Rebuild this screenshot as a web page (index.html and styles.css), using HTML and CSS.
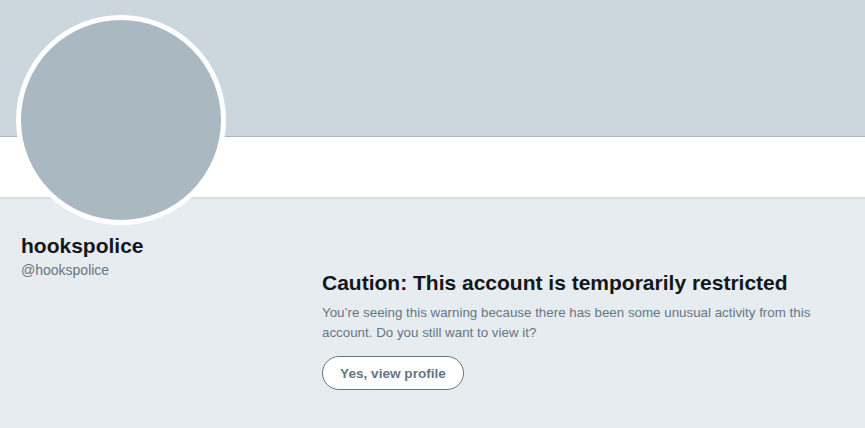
FILE: index.html
```html
<!DOCTYPE html>
<html>
<head>
<meta charset="utf-8">
<link rel="stylesheet" href="styles.css">
</head>
<body>
<div class="page">
  <div class="banner"></div>
  <div class="navbar"></div>
  <div class="avatar"></div>
  <div class="content">
    <div class="profile">
      <div class="name">hookspolice</div>
      <div class="handle">@hookspolice</div>
    </div>
    <div class="warning">
      <h1 class="title">Caution: This account is temporarily restricted</h1>
      <p class="text">You’re seeing this warning because there has been some unusual activity from this account. Do you still want to view it?</p>
      <button class="btn">Yes, view profile</button>
    </div>
  </div>
</div>
</body>
</html>
```
FILE: styles.css
```css
html, body {
  margin: 0;
  padding: 0;
  background: #e6ecf0;
  font-family: "Liberation Sans", Arial, sans-serif;
  height: 100%;
  overflow: hidden;
}
.page {
  position: relative;
  width: 865px;
  height: 428px;
}
.banner {
  height: 136px;
  background: #ccd6dd;
  border-bottom: 1px solid #aab8c2;
}
.navbar {
  height: 60px;
  background: #fff;
  border-bottom: 1px solid #d5dce1;
  box-shadow: 0 1px 1px rgba(0,0,0,0.06);
}
.avatar {
  position: absolute;
  left: 16px;
  top: 15px;
  width: 200px;
  height: 200px;
  border: 5px solid #fff;
  border-radius: 50%;
  background: #aab8c2;
}
.content {
  display: flex;
  padding-top: 36px;
}
.profile {
  width: 301px;
  padding-left: 21px;
}
.name {
  font-size: 21px;
  font-weight: 700;
  color: #14171a;
  line-height: 24px;
}
.handle {
  font-size: 14px;
  color: #657786;
  line-height: 20px;
  margin-top: 2px;
}
.warning {
  padding-top: 36px;
  width: 520px;
}
.title {
  margin: 0;
  font-size: 21px;
  font-weight: 700;
  color: #14171a;
  line-height: 26px;
}
.text {
  margin: 7px 0 0;
  font-size: 13.35px;
  line-height: 20px;
  color: #657786;
}
.btn {
  display: block;
  margin-top: 13px;
  height: 34px;
  width: 142px;
  padding: 0;
  border: 1px solid #657786;
  border-radius: 17px;
  background: #fff;
  color: #657786;
  font-family: "Liberation Sans", Arial, sans-serif;
  font-size: 13.6px;
  font-weight: 700;
}
```
